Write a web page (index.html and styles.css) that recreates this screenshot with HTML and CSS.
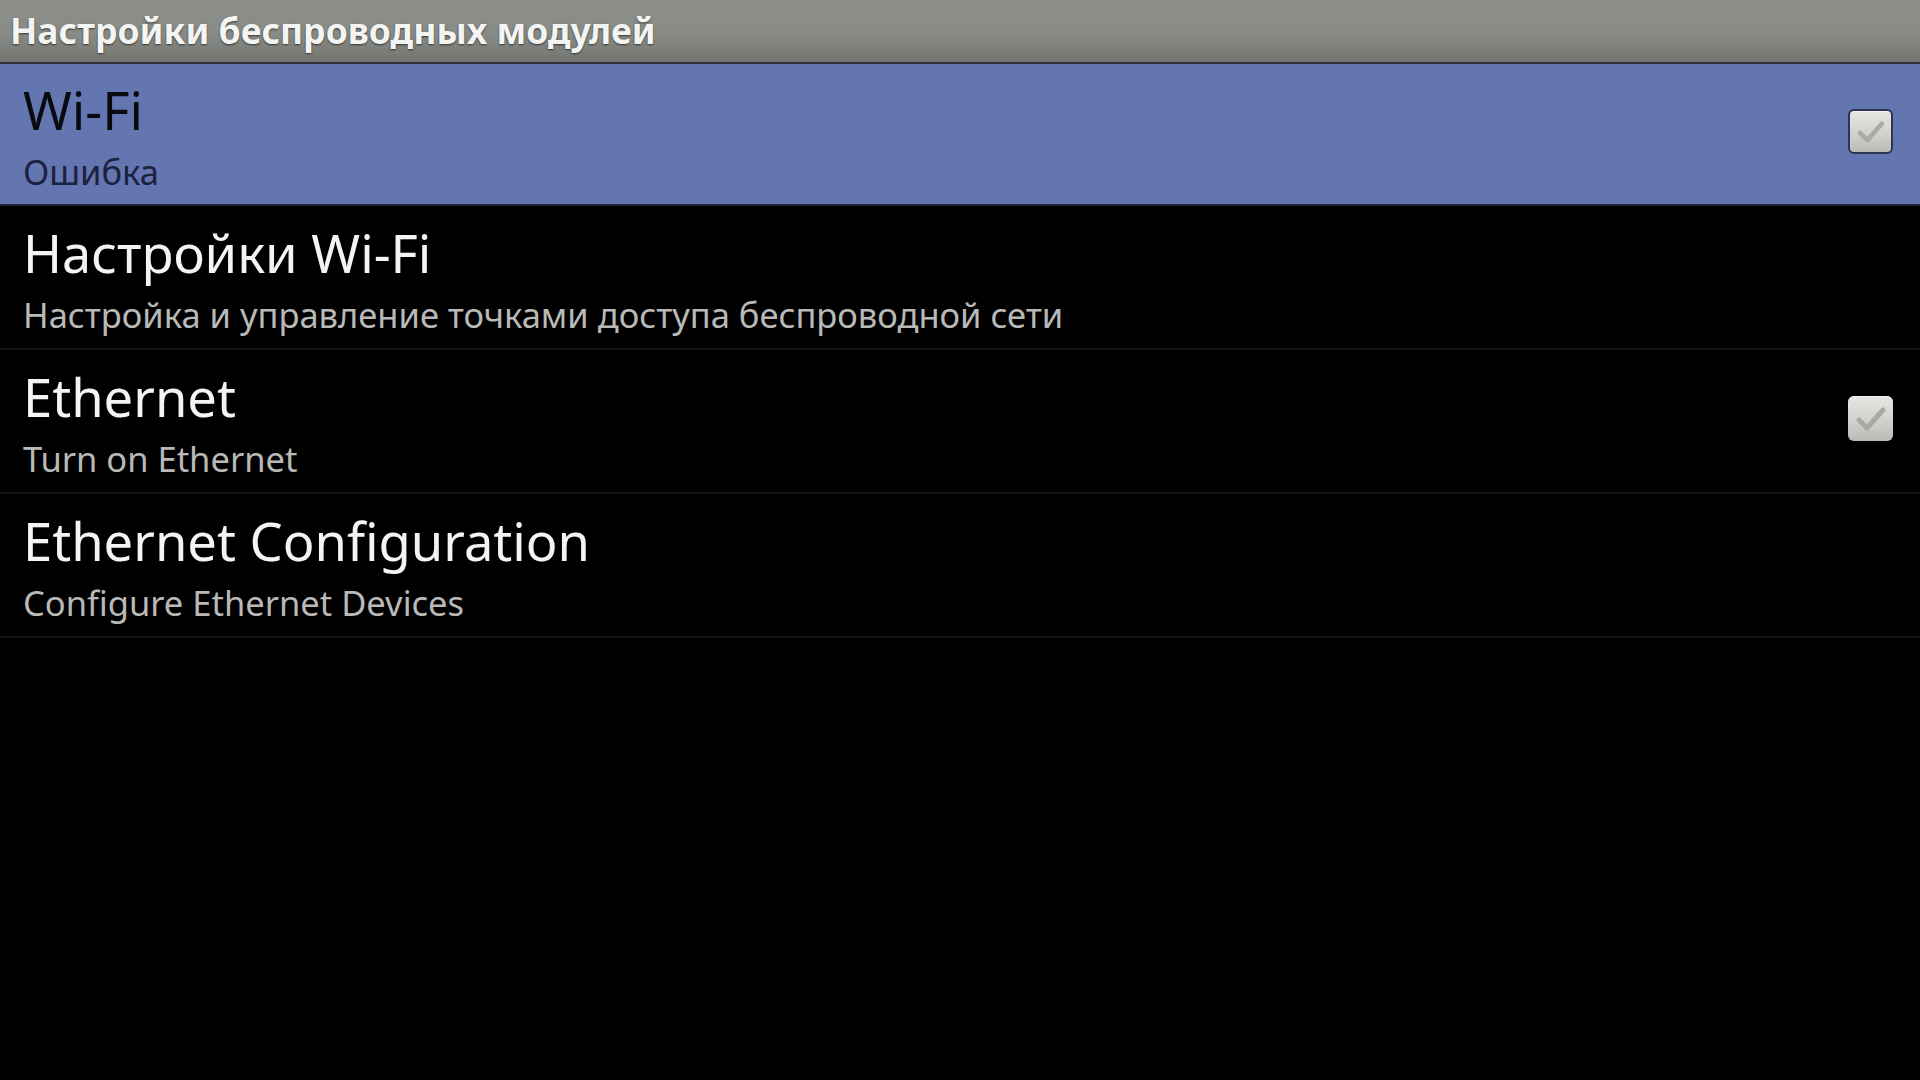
FILE: index.html
```html
<!DOCTYPE html>
<html lang="ru">
<head>
  <meta charset="UTF-8">
  <meta name="viewport" content="width=device-width, initial-scale=1.0">
  <title>Настройки беспроводных модулей</title>
  <link rel="stylesheet" href="styles.css">
</head>
<body>
  <header class="title-bar">
    <h1 class="title">Настройки беспроводных модулей</h1>
  </header>

  <main class="pref-list">
    <div class="pref-item selected">
      <div class="pref-text">
        <div class="pref-title">Wi-Fi</div>
        <div class="pref-summary">Ошибка</div>
      </div>
      <div class="checkbox">
        <svg viewBox="0 0 45 45" width="45" height="45">
          <path d="M11 24 L19 32 L35 14" fill="none" stroke="#a9aaa6" stroke-width="5" stroke-linecap="round" stroke-linejoin="round"/>
        </svg>
      </div>
    </div>

    <div class="pref-item">
      <div class="pref-text">
        <div class="pref-title">Настройки Wi-Fi</div>
        <div class="pref-summary">Настройка и управление точками доступа беспроводной сети</div>
      </div>
    </div>

    <div class="pref-item">
      <div class="pref-text">
        <div class="pref-title">Ethernet</div>
        <div class="pref-summary">Turn on Ethernet</div>
      </div>
      <div class="checkbox">
        <svg viewBox="0 0 45 45" width="45" height="45">
          <path d="M11 24 L19 32 L35 14" fill="none" stroke="#a9aaa6" stroke-width="5" stroke-linecap="round" stroke-linejoin="round"/>
        </svg>
      </div>
    </div>

    <div class="pref-item">
      <div class="pref-text">
        <div class="pref-title">Ethernet Configuration</div>
        <div class="pref-summary">Configure Ethernet Devices</div>
      </div>
    </div>
  </main>
</body>
</html>
```

FILE: styles.css
```css
* {
  margin: 0;
  padding: 0;
  box-sizing: border-box;
}

body {
  background-color: black;
  color: #f2f2f2;
  font-family: "Noto Sans", "Open Sans", sans-serif;
  width: 1920px;
  height: 1080px;
  overflow: hidden;
}

.title-bar {
  height: 64px;
  padding: 0 10px;
  display: flex;
  align-items: center;
  background: linear-gradient(to bottom, #8c8f8a 0%, #888b86 55%, #727470 100%);
  border-bottom: 2px solid #2c2f36;
}

.title {
  font-size: 35.5px;
  font-weight: bold;
  color: #f4f4f2;
  text-shadow: 0 1px 2px rgba(0, 0, 0, 0.6);
  line-height: 1;
}

.pref-item {
  height: 144px;
  display: flex;
  align-items: center;
  padding: 0 27px 0 23px;
  border-bottom: 2px solid #141414;
}

.pref-item.selected {
  height: 142px;
  background-color: #6476b0;
  border-bottom: 2px solid #1e2233;
}

.pref-text {
  flex: 1;
  align-self: flex-start;
  padding-top: 17px;
}

.pref-title {
  font-size: 52.5px;
  line-height: 60px;
  color: #f4f4f4;
}

.pref-summary {
  margin-top: 10px;
  font-size: 34.5px;
  line-height: 44px;
  color: #b9b9b7;
}

.selected .pref-text {
  padding-top: 16px;
}

.selected .pref-title {
  color: #080a10;
}

.selected .pref-summary {
  color: #1c2140;
}

.checkbox {
  width: 45px;
  height: 45px;
  margin-bottom: 6px;
  border-radius: 6px;
  background: linear-gradient(to bottom, #e6e6e2 0%, #cfcfcb 60%, #b9bab6 100%);
  box-shadow: inset 0 1px 1px rgba(255, 255, 255, 0.6);
}

.selected .checkbox {
  border: 2px solid #2c3452;
}

.checkbox svg {
  display: block;
  width: 100%;
  height: 100%;
}
```
